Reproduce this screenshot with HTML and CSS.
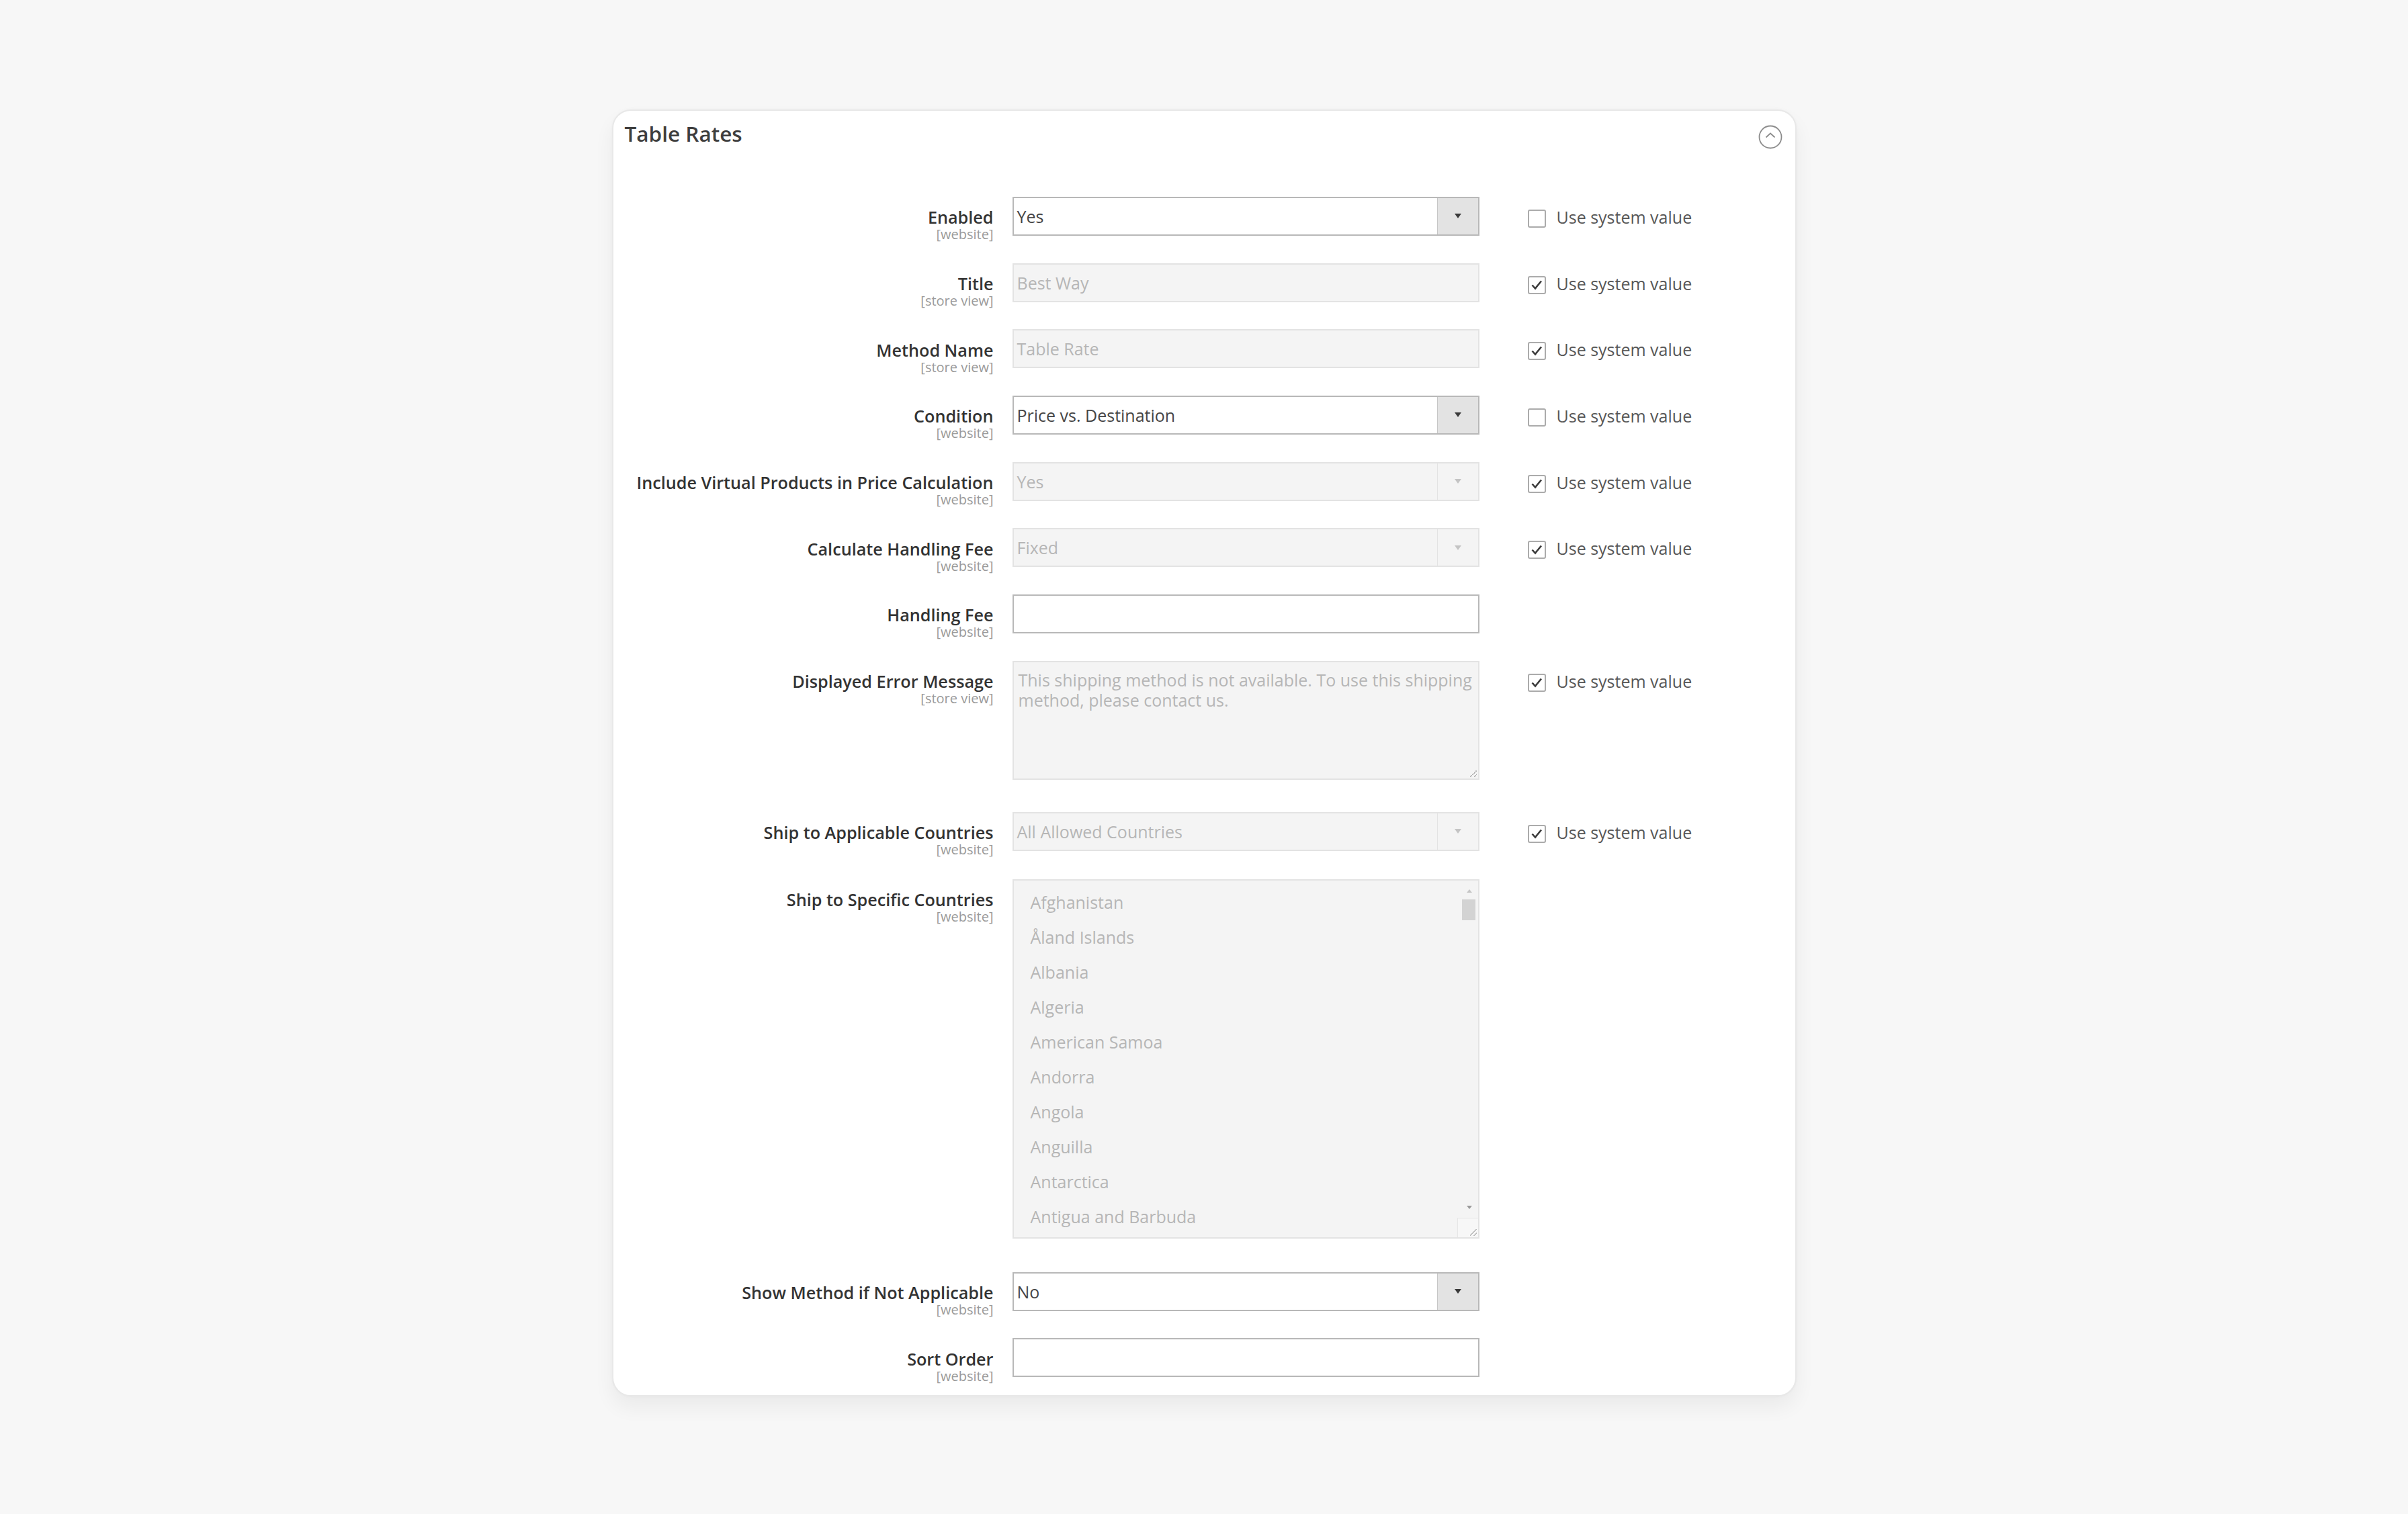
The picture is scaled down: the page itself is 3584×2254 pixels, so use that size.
FILE: index.html
```html
<!DOCTYPE html>
<html lang="en">
<head>
<meta charset="utf-8">
<title>Table Rates</title>
<link rel="stylesheet" href="styles.css">
</head>
<body>
<section class="card">
  <header class="card-head">
    <h2 class="card-title">Table Rates</h2>
    <span class="collapse">
      <svg width="36" height="36" viewBox="0 0 36 36"><circle cx="18" cy="18" r="16.5" fill="none" stroke="#8c8c8c" stroke-width="1.8"/><polyline points="11.5,18.5 18,12.5 24.5,18.5" fill="none" stroke="#8c8c8c" stroke-width="1.8"/></svg>
    </span>
  </header>

  <div class="form">
    <div class="row">
      <div class="label"><span class="label-main">Enabled</span><span class="scope">[website]</span></div>
      <div class="control select"><span class="value">Yes</span><span class="btn"><i class="arrow"></i></span></div>
      <label class="use-default"><span class="cb"></span><span class="ud-text">Use system value</span></label>
    </div>

    <div class="row">
      <div class="label"><span class="label-main">Title</span><span class="scope">[store view]</span></div>
      <div class="control is-disabled"><span class="value">Best Way</span></div>
      <label class="use-default"><span class="cb checked"><svg width="23" height="23" viewBox="0 0 23 23"><polyline points="4.5,11.5 9,16.5 18,5.5" fill="none" stroke="#3a3a3a" stroke-width="2.6"/></svg></span><span class="ud-text">Use system value</span></label>
    </div>

    <div class="row">
      <div class="label"><span class="label-main">Method Name</span><span class="scope">[store view]</span></div>
      <div class="control is-disabled"><span class="value">Table Rate</span></div>
      <label class="use-default"><span class="cb checked"><svg width="23" height="23" viewBox="0 0 23 23"><polyline points="4.5,11.5 9,16.5 18,5.5" fill="none" stroke="#3a3a3a" stroke-width="2.6"/></svg></span><span class="ud-text">Use system value</span></label>
    </div>

    <div class="row">
      <div class="label"><span class="label-main">Condition</span><span class="scope">[website]</span></div>
      <div class="control select"><span class="value">Price vs. Destination</span><span class="btn"><i class="arrow"></i></span></div>
      <label class="use-default"><span class="cb"></span><span class="ud-text">Use system value</span></label>
    </div>

    <div class="row">
      <div class="label"><span class="label-main">Include Virtual Products in Price Calculation</span><span class="scope">[website]</span></div>
      <div class="control select is-disabled"><span class="value">Yes</span><span class="btn"><i class="arrow"></i></span></div>
      <label class="use-default"><span class="cb checked"><svg width="23" height="23" viewBox="0 0 23 23"><polyline points="4.5,11.5 9,16.5 18,5.5" fill="none" stroke="#3a3a3a" stroke-width="2.6"/></svg></span><span class="ud-text">Use system value</span></label>
    </div>

    <div class="row">
      <div class="label"><span class="label-main">Calculate Handling Fee</span><span class="scope">[website]</span></div>
      <div class="control select is-disabled"><span class="value">Fixed</span><span class="btn"><i class="arrow"></i></span></div>
      <label class="use-default"><span class="cb checked"><svg width="23" height="23" viewBox="0 0 23 23"><polyline points="4.5,11.5 9,16.5 18,5.5" fill="none" stroke="#3a3a3a" stroke-width="2.6"/></svg></span><span class="ud-text">Use system value</span></label>
    </div>

    <div class="row">
      <div class="label"><span class="label-main">Handling Fee</span><span class="scope">[website]</span></div>
      <div class="control"><span class="value"></span></div>
    </div>

    <div class="row row-textarea">
      <div class="label"><span class="label-main">Displayed Error Message</span><span class="scope">[store view]</span></div>
      <div class="control textarea is-disabled">
        <span class="ta-line">This shipping method is not available. To use this shipping</span>
        <span class="ta-line">method, please contact us.</span>
        <span class="grip"></span>
      </div>
      <label class="use-default"><span class="cb checked"><svg width="23" height="23" viewBox="0 0 23 23"><polyline points="4.5,11.5 9,16.5 18,5.5" fill="none" stroke="#3a3a3a" stroke-width="2.6"/></svg></span><span class="ud-text">Use system value</span></label>
    </div>

    <div class="row row-applicable">
      <div class="label"><span class="label-main">Ship to Applicable Countries</span><span class="scope">[website]</span></div>
      <div class="control select is-disabled"><span class="value">All Allowed Countries</span><span class="btn"><i class="arrow"></i></span></div>
      <label class="use-default"><span class="cb checked"><svg width="23" height="23" viewBox="0 0 23 23"><polyline points="4.5,11.5 9,16.5 18,5.5" fill="none" stroke="#3a3a3a" stroke-width="2.6"/></svg></span><span class="ud-text">Use system value</span></label>
    </div>

    <div class="row row-multi">
      <div class="label"><span class="label-main">Ship to Specific Countries</span><span class="scope">[website]</span></div>
      <div class="control multiselect is-disabled">
        <ul class="options">
          <li>Afghanistan</li>
          <li>Åland Islands</li>
          <li>Albania</li>
          <li>Algeria</li>
          <li>American Samoa</li>
          <li>Andorra</li>
          <li>Angola</li>
          <li>Anguilla</li>
          <li>Antarctica</li>
          <li>Antigua and Barbuda</li>
        </ul>
        <span class="sb-up"></span>
        <span class="sb-thumb"></span>
        <span class="sb-down"></span>
        <span class="sb-corner"><span class="grip"></span></span>
      </div>
    </div>

    <div class="row">
      <div class="label"><span class="label-main">Show Method if Not Applicable</span><span class="scope">[website]</span></div>
      <div class="control select"><span class="value">No</span><span class="btn"><i class="arrow"></i></span></div>
    </div>

    <div class="row row-last">
      <div class="label"><span class="label-main">Sort Order</span><span class="scope">[website]</span></div>
      <div class="control"><span class="value"></span></div>
    </div>
  </div>
</section>
</body>
</html>
```

FILE: styles.css
```css
* { box-sizing: border-box; }
html, body { margin: 0; padding: 0; }
body {
  background: #f7f7f7;
  font-family: "Open Sans", "Liberation Sans", sans-serif;
  color: #333333;
  padding: 163px 0 120px;
}

.card {
  width: 1763px;
  margin: 0 auto;
  background: #ffffff;
  border: 2px solid #e8e8e8;
  border-radius: 28px;
  padding: 15.4px 19px 26.7px 17px;
  box-shadow: 0 16px 30px rgba(0, 0, 0, 0.055), 0 0 4px rgba(0, 0, 0, 0.03);
}

.card-head {
  display: flex;
  justify-content: space-between;
  align-items: flex-start;
  height: 38.4px;
}
.card-title {
  margin: 0;
  font-size: 31.5px;
  line-height: 38.4px;
  font-weight: 600;
  color: #3e3e3e;
}
.collapse {
  display: block;
  width: 36px;
  height: 36px;
  margin-top: 5.6px;
}
.collapse svg { display: block; }

.form { margin-top: 74.2px; }

.row {
  display: grid;
  grid-template-columns: 549px 695px 1fr;
  column-gap: 28px;
  align-items: start;
  margin-bottom: 40.67px;
}
.row-textarea { margin-bottom: 48px; }
.row-applicable { margin-bottom: 42px; }
.row-multi { margin-bottom: 50px; }
.row-last { margin-bottom: 0; }

.label {
  height: 58px;
  text-align: right;
  padding-top: 15.4px;
  white-space: nowrap;
}
.label-main {
  display: block;
  font-size: 25.2px;
  line-height: 30px;
  font-weight: 600;
  color: #333333;
}
.scope {
  display: block;
  font-size: 20px;
  line-height: 22px;
  color: #9a9a9a;
}

.control {
  position: relative;
  height: 58px;
  border: 2px solid #b8b8b8;
  background: #ffffff;
  display: flex;
  align-items: center;
  font-size: 25px;
  color: #454545;
  white-space: nowrap;
  overflow: hidden;
}
.control .value {
  flex: 1;
  padding-left: 5px;
}
.control.is-disabled {
  background: #f4f4f4;
  border-color: #e3e3e3;
  color: #b6b6b6;
}

.select .btn {
  width: 61px;
  height: 100%;
  background: #e3e3e3;
  border-left: 1px solid #c6c6c6;
  display: flex;
  align-items: center;
  justify-content: center;
}
.select .arrow {
  display: block;
  width: 0;
  height: 0;
  border-left: 5px solid transparent;
  border-right: 5px solid transparent;
  border-top: 7px solid #3a3a3a;
}
.select.is-disabled .btn {
  background: #f4f4f4;
  border-left-color: #e3e3e3;
}
.select.is-disabled .arrow { border-top-color: #c4c4c4; }

.textarea {
  height: 177px;
  display: block;
  padding: 11px 6px 0 7px;
  line-height: 30px;
  overflow: hidden;
}
.ta-line { display: block; }

.grip {
  position: absolute;
  right: 2px;
  bottom: 2px;
  width: 10px;
  height: 10px;
  background:
    linear-gradient(135deg, transparent 45%, #b9b9b9 45%, #b9b9b9 55%, transparent 55%) 0 0 / 10px 10px no-repeat,
    linear-gradient(135deg, transparent 75%, #b9b9b9 75%, #b9b9b9 85%, transparent 85%) 0 0 / 10px 10px no-repeat;
}

.multiselect {
  height: 535px;
  display: block;
  font-size: 25px;
  color: #bbbbbb;
}
.options {
  list-style: none;
  margin: 0;
  padding: 6px 0 0 25px;
  line-height: 52px;
}
.sb-up, .sb-down {
  position: absolute;
  right: 9px;
  width: 0;
  height: 0;
  border-left: 4px solid transparent;
  border-right: 4px solid transparent;
}
.sb-up {
  top: 13px;
  border-bottom: 5px solid #c6c6c6;
}
.sb-down {
  top: 484px;
  border-top: 5px solid #9a9a9a;
}
.sb-thumb {
  position: absolute;
  top: 28px;
  right: 4px;
  width: 20px;
  height: 31px;
  background: #d3d3d3;
}
.sb-corner {
  position: absolute;
  right: 0;
  bottom: 0;
  width: 31px;
  height: 29px;
  background: #f7f7f7;
  border-top: 1px solid #e6e6e6;
  border-left: 1px solid #e6e6e6;
}

.use-default {
  display: flex;
  align-items: flex-start;
  gap: 16px;
  padding: 19px 0 0 44px;
  white-space: nowrap;
}
.cb {
  flex: none;
  width: 27px;
  height: 27px;
  border: 2px solid #ababab;
  border-radius: 3px;
  background: #ffffff;
  display: flex;
  align-items: center;
  justify-content: center;
}
.cb svg { display: block; }
.ud-text {
  font-size: 25px;
  line-height: 27px;
  margin-top: -2px;
  color: #575757;
}
```
